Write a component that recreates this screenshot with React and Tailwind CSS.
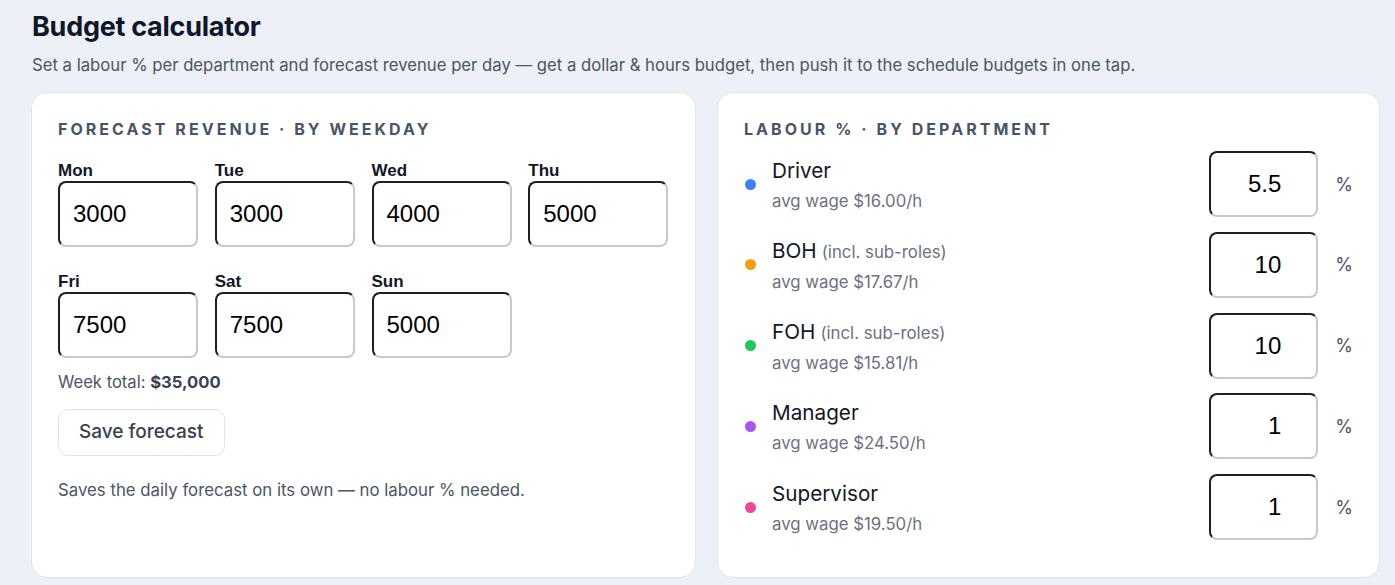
import { useState } from "react";

const DAYS = [
  { key: "mon", label: "Mon", value: "3000" },
  { key: "tue", label: "Tue", value: "3000" },
  { key: "wed", label: "Wed", value: "4000" },
  { key: "thu", label: "Thu", value: "5000" },
  { key: "fri", label: "Fri", value: "7500" },
  { key: "sat", label: "Sat", value: "7500" },
  { key: "sun", label: "Sun", value: "5000" },
];

const DEPTS = [
  { key: "driver", name: "Driver", note: "", wage: "$16.00", pct: "5.5", dot: "bg-[#3b82f6]" },
  { key: "boh", name: "BOH", note: "(incl. sub-roles)", wage: "$17.67", pct: "10", dot: "bg-[#f59e0b]" },
  { key: "foh", name: "FOH", note: "(incl. sub-roles)", wage: "$15.81", pct: "10", dot: "bg-[#22c55e]" },
  { key: "manager", name: "Manager", note: "", wage: "$24.50", pct: "1", dot: "bg-[#a855f7]" },
  { key: "supervisor", name: "Supervisor", note: "", wage: "$19.50", pct: "1", dot: "bg-[#ec4899]" },
];

// classic inset input border, dark top/left, light bottom/right
const inputBorder =
  "border-2 border-t-[#1f1f1f] border-l-[#1f1f1f] border-b-[#c9c9c9] border-r-[#c9c9c9] rounded-[8px] bg-white outline-none shrink-0";

const SectionTitle = ({ children }) => (
  <h2 className="text-[16px] leading-5 font-bold tracking-[0.19em] text-[#475569] uppercase">
    {children}
  </h2>
);

const App = () => {
  const [forecast, setForecast] = useState(
    Object.fromEntries(DAYS.map((d) => [d.key, d.value]))
  );
  const [pcts, setPcts] = useState(
    Object.fromEntries(DEPTS.map((d) => [d.key, d.pct]))
  );

  const total = Object.values(forecast).reduce((s, v) => s + (parseFloat(v) || 0), 0);

  return (
    <div className="min-h-screen bg-[#edf0f6] pt-[10px] pl-[31px] pr-[15px] font-['Inter',sans-serif] text-[#111827]">
      <h1 className="text-[27px] leading-8 font-bold tracking-[-0.01em] text-[#0f172a] pl-[1px] pt-[1px]">
        Budget calculator
      </h1>
      <p className="mt-[11px] text-[16.7px] leading-[22px] text-[#4b5563] pl-[1px]">
        Set a labour % per department and forecast revenue per day — get a dollar &amp; hours budget, then push it to the schedule budgets in one tap.
      </p>

      <div className="mt-4 grid grid-cols-[665px_663px] gap-[21px]">
        {/* Forecast card */}
        <section className="h-[486px] bg-white rounded-[16px] border border-[#e1e5eb] px-[26px] pt-[26px]">
          <SectionTitle>Forecast revenue · by weekday</SectionTitle>
          <div className="mt-[23px] grid grid-cols-4 gap-x-[16px] gap-y-[26px] w-[611px]">
            {DAYS.map((d) => (
              <label key={d.key} className="flex flex-col">
                <span className="font-['Liberation_Sans',Arial,sans-serif] font-bold text-[17px] leading-[18px] text-[#111827] mb-[1px]">
                  {d.label}
                </span>
                <input
                  type="text"
                  value={forecast[d.key]}
                  onChange={(e) => setForecast({ ...forecast, [d.key]: e.target.value })}
                  className={`${inputBorder} h-[66px] w-[140px] pl-[13px] font-['Liberation_Sans',Arial,sans-serif] text-[24px] text-black`}
                />
              </label>
            ))}
          </div>
          <p className="mt-[13px] text-[16.6px] leading-[22px] text-[#4b5563]">
            Week total: <span className="font-bold text-[#374151]">${total.toLocaleString("en-US")}</span>
          </p>
          <button className="mt-[16px] h-[47px] px-[20px] rounded-[10px] border border-[#dfe3e8] bg-white text-[19px] font-medium text-[#374151]">
            Save forecast
          </button>
          <p className="mt-[23px] text-[16.8px] leading-[22px] text-[#4b5563]">
            Saves the daily forecast on its own — no labour % needed.
          </p>
        </section>

        {/* Labour card */}
        <section className="h-[486px] bg-white rounded-[16px] border border-[#e1e5eb] pl-[26px] pr-[26px] pt-[26px]">
          <SectionTitle>Labour % · by department</SectionTitle>
          <div className="mt-[12px] flex flex-col gap-[14.75px]">
            {DEPTS.map((d) => (
              <div key={d.key} className="flex items-center h-[66px]">
                <span className={`ml-[1px] w-[11px] h-[11px] rounded-full shrink-0 ${d.dot}`} />
                <div className="ml-[16px] flex-1 flex flex-col gap-[6px] pt-[2px]">
                  <div className="text-[20.7px] leading-[26px] text-[#111827]">
                    {d.name}
                    {d.note && <span className="ml-[5px] text-[16.8px] text-[#6b7280]">{d.note}</span>}
                  </div>
                  <div className="text-[16.8px] leading-[22px] text-[#6b7280]">avg wage {d.wage}/h</div>
                </div>
                <input
                  type="text"
                  value={pcts[d.key]}
                  onChange={(e) => setPcts({ ...pcts, [d.key]: e.target.value })}
                  className={`${inputBorder} h-[66px] w-[109px] pr-[35px] text-right font-['Liberation_Sans',Arial,sans-serif] text-[24px] text-black`}
                />
                <span className="ml-[17px] shrink-0 text-[18px] text-[#4b5563]">%</span>
              </div>
            ))}
          </div>
        </section>
      </div>
    </div>
  );
};

export default App;
